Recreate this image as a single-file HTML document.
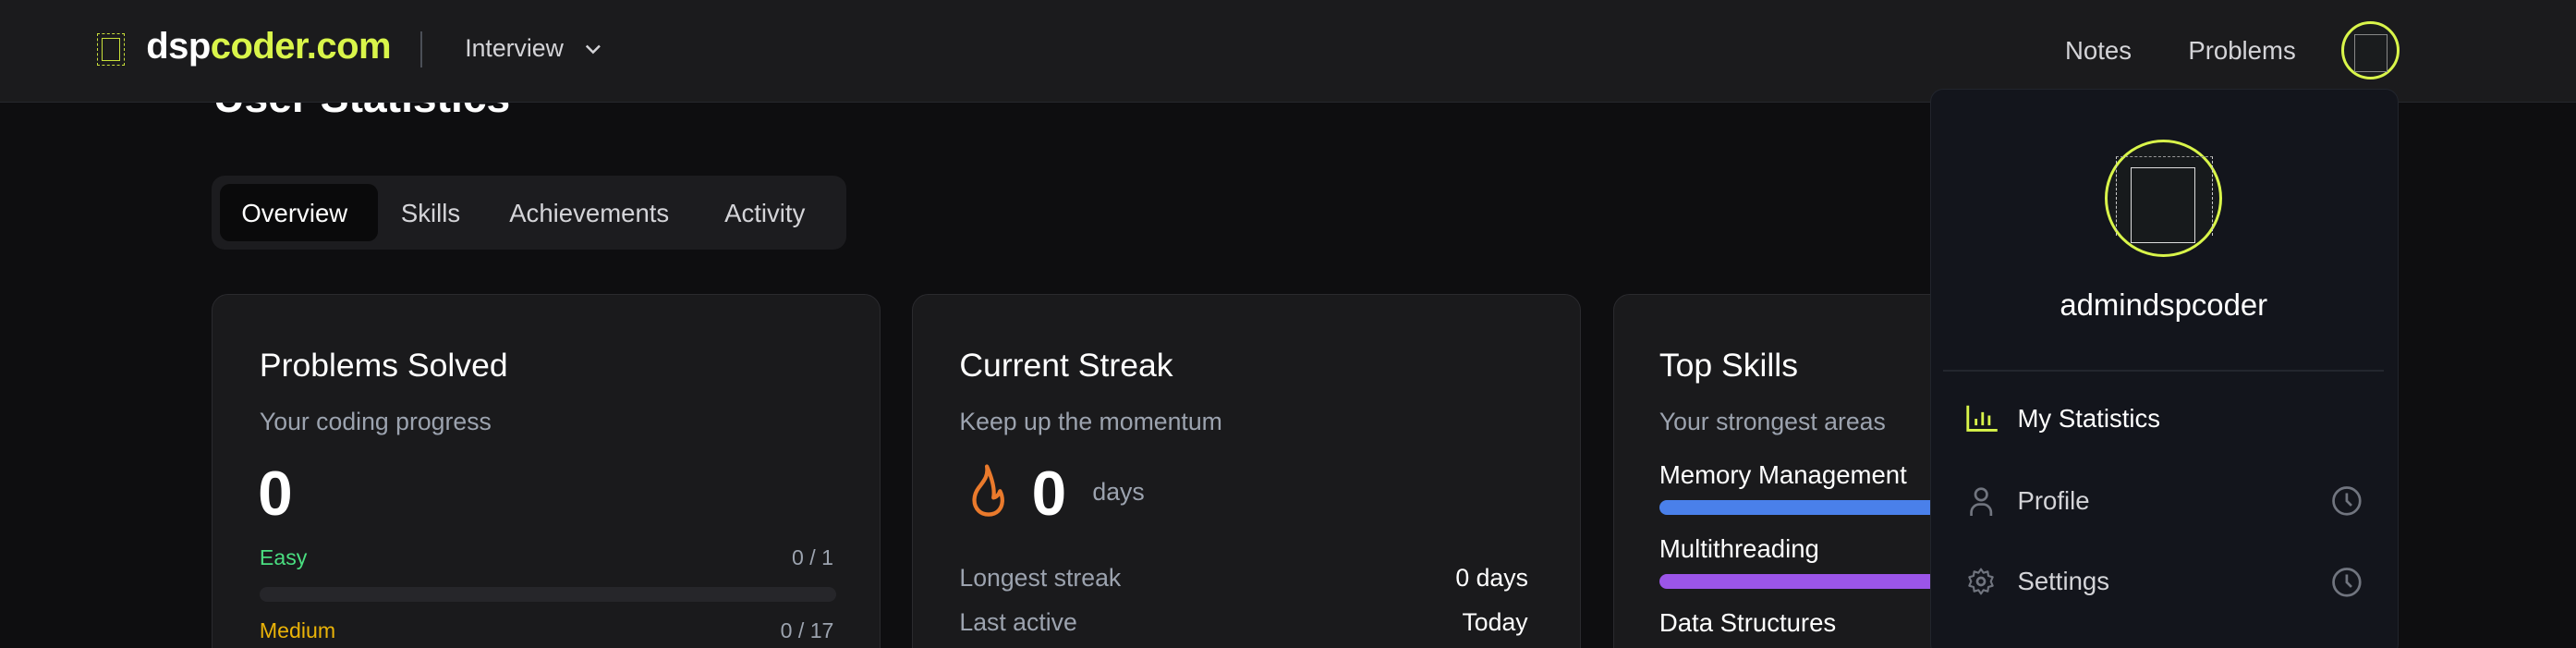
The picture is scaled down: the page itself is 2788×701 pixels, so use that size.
<!DOCTYPE html>
<html><head><meta charset="utf-8"><style>
html{margin:0;padding:0;width:2788px;height:700px;overflow:hidden;background:#0e0e10}
body{margin:0;padding:0;width:1568px;height:394px;overflow:hidden;zoom:1.77806;background:#0e0e10;font-family:"Liberation Sans",sans-serif;color:#fff;position:relative}
.a{position:absolute;white-space:nowrap}
.hdr{left:0;top:0;width:1568px;height:62px;background:#1b1b1d;border-bottom:1px solid #26282d}
.card{position:absolute;top:179px;width:406px;height:230px;background:#1a1a1c;border:1px solid #2a2a2e;border-radius:10px}
.t{font-size:20px}
.s{font-size:15px;color:#9ca3af}
.g{color:#9ca3af}
</style></head><body>
<div class="a" style="left:130px;top:44px;font-size:26px;font-weight:bold">User Statistics</div>
<div class="a hdr"></div>
<div class="a" style="left:59px;top:20px;width:16px;height:19px;border:1px dashed #c9e03a"></div>
<div class="a" style="left:62px;top:23px;width:10px;height:13px;border:1px solid #c9e03a"></div>
<div class="a" style="left:89px;top:16px;font-size:22.5px;font-weight:bold;letter-spacing:-0.3px">dsp<span style="color:#d9f54a">coder.com</span></div>
<div class="a" style="left:256px;top:19px;width:1px;height:22px;background:#4b4f57"></div>
<div class="a" style="left:283px;top:21px;font-size:15px;color:#d4d4d8">Interview</div>
<svg class="a" style="left:356px;top:26px" width="10" height="8" viewBox="0 0 10 8"><path d="M1 2l4 4 4-4" stroke="#d4d4d8" stroke-width="1.4" fill="none"/></svg>
<div class="a" style="left:1257px;top:22px;font-size:15.5px;color:#d4d4d8">Notes</div>
<div class="a" style="left:1332px;top:22px;font-size:15.5px;color:#d4d4d8">Problems</div>
<div class="a" style="left:1425px;top:13px;width:32px;height:32px;border:2px solid #d9f54a;border-radius:50%;background:#1a1c1e"></div>
<div class="a" style="left:1433px;top:21px;width:19px;height:22px;border:1px solid #888"></div>

<div class="a" style="left:129px;top:107px;width:386px;height:45px;background:#1c1c1f;border-radius:8px"></div>
<div class="a" style="left:134px;top:112px;width:96px;height:35px;background:#0a0a0b;border-radius:6px"></div>
<div class="a" style="left:147px;top:121px;font-size:15.5px">Overview</div>
<div class="a" style="left:244px;top:121px;font-size:15.5px;color:#d4d4d8">Skills</div>
<div class="a" style="left:310px;top:121px;font-size:15.5px;color:#d4d4d8">Achievements</div>
<div class="a" style="left:441px;top:121px;font-size:15.5px;color:#d4d4d8">Activity</div>

<div class="card" style="left:129px"></div>
<div class="card" style="left:555px"></div>
<div class="card" style="left:982px"></div>

<div class="a t" style="left:158px;top:211px">Problems Solved</div>
<div class="a s" style="left:158px;top:248px">Your coding progress</div>
<div class="a" style="left:157px;top:279px;font-size:38px;font-weight:bold">0</div>
<div class="a" style="left:158px;top:332px;font-size:13px;color:#4ade80">Easy</div>
<div class="a g" style="left:482px;top:332px;font-size:13px">0 / 1</div>
<div class="a" style="left:158px;top:357px;width:351px;height:9px;background:#26262a;border-radius:5px"></div>
<div class="a" style="left:158px;top:376px;font-size:13px;color:#eab308">Medium</div>
<div class="a g" style="left:475px;top:376px;font-size:13px">0 / 17</div>

<div class="a t" style="left:584px;top:211px">Current Streak</div>
<div class="a s" style="left:584px;top:248px">Keep up the momentum</div>
<svg class="a" style="left:588px;top:282px" width="28" height="36" viewBox="0 0 28 36"><path d="M13 2c1 6 -2 9 -5 13c-3 4 -4 10 0 14c3 3 9 3 12 0c3-3 3-8 1-12c-1 3-3 4-4 4c1-5-1-12-4-19z" stroke="#ea7a2c" stroke-width="2.4" fill="none" stroke-linejoin="round"/></svg>
<div class="a" style="left:628px;top:279px;font-size:38px;font-weight:bold">0</div>
<div class="a g" style="left:665px;top:291px;font-size:15px">days</div>
<div class="a g" style="left:584px;top:343px;font-size:15px">Longest streak</div>
<div class="a" style="left:886px;top:343px;font-size:15px">0 days</div>
<div class="a g" style="left:584px;top:370px;font-size:15px">Last active</div>
<div class="a" style="left:890px;top:370px;font-size:15px">Today</div>

<div class="a t" style="left:1010px;top:211px">Top Skills</div>
<div class="a s" style="left:1010px;top:248px">Your strongest areas</div>
<div class="a" style="left:1010px;top:280px;font-size:15.5px">Memory Management</div>
<div class="a" style="left:1010px;top:304px;width:180px;height:9px;background:#4a80ea;border-radius:5px 0 0 5px"></div>
<div class="a" style="left:1010px;top:325px;font-size:15.5px">Multithreading</div>
<div class="a" style="left:1010px;top:349px;width:180px;height:9px;background:#9b55e8;border-radius:5px 0 0 5px"></div>
<div class="a" style="left:1010px;top:370px;font-size:15.5px">Data Structures</div>

<div class="a" style="left:1175px;top:54px;width:284px;height:345px;background:#13151c;border:1px solid #22252d;border-radius:8px"></div>
<div class="a" style="left:1281px;top:85px;width:68px;height:68px;border:2px solid #d9f54a;border-radius:50%;background:#171a1c"></div>
<div class="a" style="left:1288px;top:95px;width:58px;height:48px;border-left:1px dashed #ccc;border-right:1px dashed #ccc;border-top:1px dashed #999"></div>
<div class="a" style="left:1297px;top:102px;width:38px;height:45px;border:1px solid #ddd"></div>
<div class="a" style="left:1317px;top:175px;font-size:18.5px;transform:translateX(-50%)">admindspcoder</div>
<div class="a" style="left:1183px;top:225px;width:268px;height:1px;background:#23262e"></div>
<svg class="a" style="left:1197px;top:246px" width="20" height="18" viewBox="0 0 20 18"><path d="M1 1v15h18M6 13v-4M10 13v-8M14 13v-6" stroke="#d9f54a" stroke-width="1.6" fill="none"/></svg>
<div class="a" style="left:1228px;top:246px;font-size:15.5px">My Statistics</div>
<svg class="a" style="left:1198px;top:296px" width="16" height="19" viewBox="0 0 16 19"><circle cx="8" cy="5" r="3.5" stroke="#71757f" stroke-width="1.5" fill="none"/><path d="M2 18v-2a5 5 0 0 1 5-5h2a5 5 0 0 1 5 5v2" stroke="#71757f" stroke-width="1.5" fill="none"/></svg>
<div class="a" style="left:1228px;top:296px;font-size:15.5px;color:#d4d4d8">Profile</div>
<svg class="a" style="left:1197px;top:345px" width="18" height="18" viewBox="0 0 24 24"><circle cx="12" cy="12" r="3" stroke="#71757f" stroke-width="2" fill="none"/><path d="M12 2l2 3 3.5-1 .5 3.5 3.5 1-1.5 3.5 1.5 3.5-3.5 1-.5 3.5-3.5-1-2 3-2-3-3.5 1-.5-3.5-3.5-1 1.5-3.5L2.5 8.5 6 7.5 6.5 4 10 5z" stroke="#71757f" stroke-width="1.6" fill="none" stroke-linejoin="round"/></svg>
<div class="a" style="left:1228px;top:345px;font-size:15.5px;color:#d4d4d8">Settings</div>
<svg class="a" style="left:1419px;top:295px" width="19" height="19" viewBox="0 0 20 20"><circle cx="10" cy="10" r="8.5" stroke="#71757f" stroke-width="1.6" fill="none"/><path d="M10 5v5l3 3" stroke="#71757f" stroke-width="1.6" fill="none"/></svg>
<svg class="a" style="left:1419px;top:345px" width="19" height="19" viewBox="0 0 20 20"><circle cx="10" cy="10" r="8.5" stroke="#71757f" stroke-width="1.6" fill="none"/><path d="M10 5v5l3 3" stroke="#71757f" stroke-width="1.6" fill="none"/></svg>
</body></html>
